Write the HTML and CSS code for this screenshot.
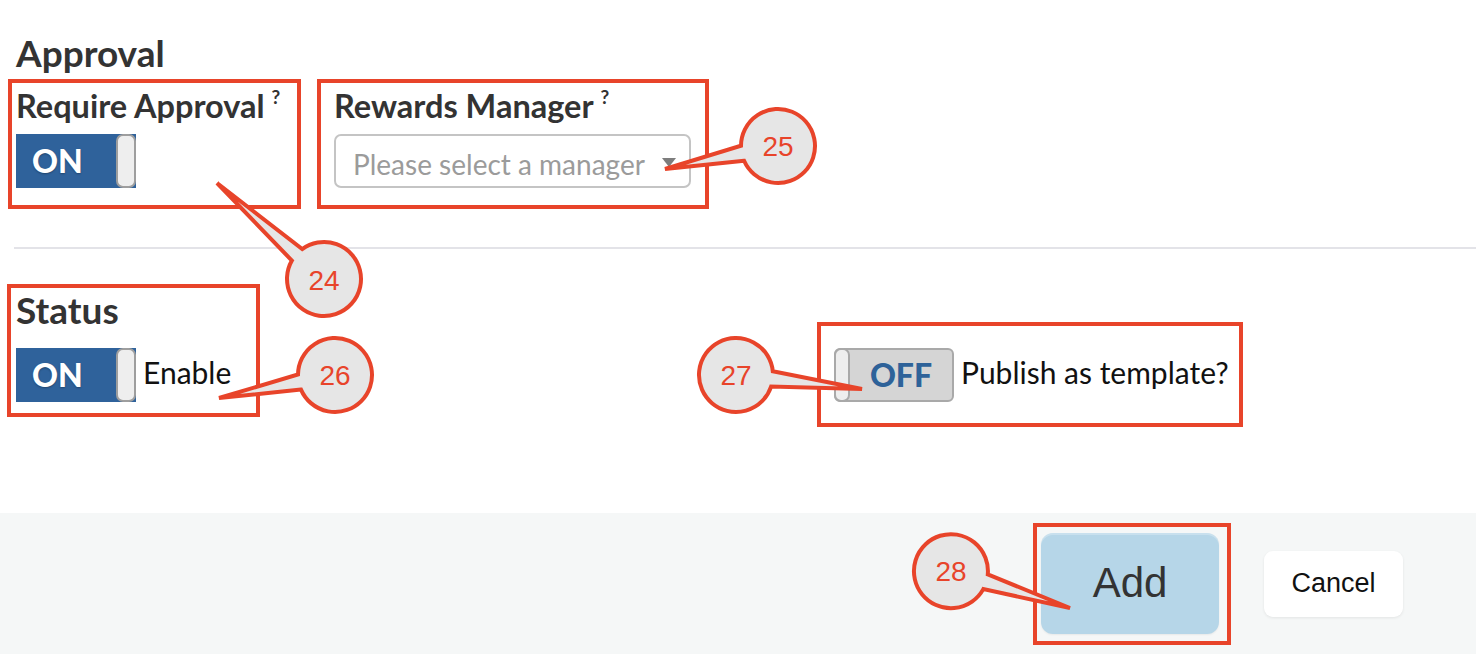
FILE: index.html
```html
<!DOCTYPE html>
<html lang="en">
<head>
  <meta charset="UTF-8" />
  <meta name="viewport" content="width=device-width, initial-scale=1.0" />
  <title>Reward settings</title>
  <link rel="stylesheet" href="styles.css">
</head>
<body>
  <div class="page">
    <section class="approval">
      <h2 class="section-title">Approval</h2>
      <div class="field-row">
        <div class="field mark require-box">
          <label class="field-label">Require Approval<span class="hint">?</span></label>
          <div class="toggle on">
            <span class="toggle-text">ON</span>
            <span class="knob"></span>
          </div>
        </div>
        <div class="field mark manager-box">
          <label class="field-label">Rewards Manager<span class="hint">?</span></label>
          <div class="select">
            <span class="placeholder">Please select a manager</span>
            <span class="caret"></span>
          </div>
        </div>
      </div>
    </section>

    <hr class="divider" />

    <section class="status">
      <div class="field mark status-box">
        <h2 class="section-title">Status</h2>
        <div class="switch-row">
          <div class="toggle on">
            <span class="toggle-text">ON</span>
            <span class="knob"></span>
          </div>
          <span class="switch-label">Enable</span>
        </div>
      </div>
      <div class="field mark publish-box">
        <div class="switch-row">
          <div class="toggle off">
            <span class="knob"></span>
            <span class="toggle-text">OFF</span>
          </div>
          <span class="switch-label">Publish as template?</span>
        </div>
      </div>
    </section>

    <footer class="actions">
      <div class="mark add-box">
        <button class="btn btn-add">Add</button>
      </div>
      <button class="btn btn-cancel">Cancel</button>
    </footer>

    <!-- numbered callouts drawn over the screenshot -->
    <svg class="callouts" width="1476" height="654" viewBox="0 0 1476 654">
      <g class="bubble">
        <path d="M291.9 260.6 L217 183 L302.2 249.1 A37 37 0 1 1 291.9 260.6 Z" />
        <text x="324" y="290">24</text>
      </g>
      <g class="bubble">
        <path d="M744.1 160.8 L665 169 L741 145.7 A37 37 0 1 1 744.1 160.8 Z" />
        <text x="778" y="156">25</text>
      </g>
      <g class="bubble">
        <path d="M301 389.6 L219 398 L298 374.5 A37 37 0 1 1 301 389.6 Z" />
        <text x="335" y="385">26</text>
      </g>
      <g class="bubble">
        <path d="M772.8 371.3 L862 389 L771.1 386.6 A37 37 0 1 1 772.8 371.3 Z" />
        <text x="736" y="385">27</text>
      </g>
      <g class="bubble">
        <path d="M987.8 574.4 L1070 608 L983.3 589.1 A37 37 0 1 1 987.8 574.4 Z" />
        <text x="951" y="581">28</text>
      </g>
    </svg>
  </div>
</body>
</html>
```

FILE: styles.css
```css
body {
  margin: 0;
  font-family: Lato, "Liberation Sans", sans-serif;
  background-color: #fff;
  color: #333;
}
.page {
  position: relative;
  width: 1476px;
  height: 654px;
  overflow: hidden;
}
.approval {
  padding: 33px 0 0 8px;
}
.section-title {
  margin: 0 0 6px 8px;
  font-size: 37px;
  line-height: 40px;
  font-weight: 700;
  color: #333;
}
.field-row {
  display: flex;
  gap: 16px;
}
.mark {
  border: 4px solid #e8442a;
  box-sizing: border-box;
}
.field-label {
  display: block;
  font-size: 32.5px;
  line-height: 36px;
  font-weight: 700;
  color: #333;
}
.hint {
  font-size: 19px;
  line-height: 0;
  vertical-align: 14px;
  margin-left: 7px;
}
.require-box {
  width: 293px;
  height: 130px;
  padding: 5px 0 0 4px;
}
.manager-box {
  width: 392px;
  height: 130px;
  padding: 5px 0 0 13px;
}
.require-box .toggle,
.manager-box .select {
  margin-top: 10px;
}

/* toggles */
.toggle {
  display: flex;
  align-items: stretch;
  width: 120px;
  height: 54px;
  box-sizing: border-box;
  font-size: 32px;
  font-weight: 900;
}
.toggle.on {
  background-color: #2f629b;
  color: #fff;
}
.toggle.on .toggle-text {
  flex: 1;
  padding-left: 16px;
  line-height: 54px;
  text-shadow: 0 1px 2px rgba(0, 0, 0, 0.3);
}
.toggle.off {
  background-color: #d5d5d5;
  border: 2px solid #a9a9a9;
  border-radius: 6px;
  color: #2e6299;
}
.toggle.off .toggle-text {
  flex: 1;
  text-align: center;
  line-height: 50px;
  font-size: 32px;
}
.knob {
  width: 20px;
  box-sizing: border-box;
  background-color: #eeeeee;
  border: 2px solid #9e9e9e;
  border-radius: 7px;
}
.toggle.off .knob {
  width: 16px;
  margin: -2px 0 -2px -2px;
  border-color: #a9a9a9;
}

/* select */
.select {
  display: flex;
  align-items: center;
  justify-content: space-between;
  width: 357px;
  height: 54px;
  box-sizing: border-box;
  padding: 0 13px 0 17px;
  border: 2px solid #c4c4c4;
  border-radius: 7px;
}
.placeholder {
  font-size: 28px;
  color: #9b9b9b;
  padding-top: 5px;
}
.caret {
  width: 0;
  height: 0;
  border-left: 7px solid transparent;
  border-right: 7px solid transparent;
  border-top: 9px solid #7d7d7d;
  margin-top: 2px;
}

.divider {
  margin: 38px 0 0 14px;
  height: 2px;
  border: 0;
  background-color: #e3e3e8;
}

/* status */
.status {
  display: flex;
  align-items: flex-start;
  padding: 35px 0 0 7px;
}
.status-box {
  width: 253px;
  height: 133px;
  padding: 2px 0 0 5px;
}
.status-box .section-title {
  margin: 0 0 18px 0;
}
.switch-row {
  display: flex;
  align-items: center;
  gap: 7px;
}
.switch-label {
  font-size: 30px;
  color: #111;
  padding-bottom: 6px;
}
.publish-box {
  width: 426px;
  height: 105px;
  margin: 38px 0 0 557px;
  padding: 22px 0 0 13px;
}

/* footer */
.actions {
  display: flex;
  justify-content: flex-end;
  align-items: center;
  gap: 33px;
  margin-top: 86px;
  height: 141px;
  padding-right: 73px;
  background-color: #f5f7f7;
}
.add-box {
  width: 198px;
  height: 122px;
  padding: 4px;
}
.btn {
  font-family: "Liberation Sans", Arial, sans-serif;
  border: 0;
  color: #333;
}
.btn-add {
  width: 178px;
  height: 101px;
  margin-top: 2px;
  background-color: #b6d6e8;
  border-radius: 12px;
  font-size: 42px;
  box-shadow: inset 0 2px 0 rgba(255, 255, 255, 0.25), 0 1px 2px rgba(0, 0, 0, 0.06);
}
.btn-cancel {
  width: 139px;
  height: 66px;
  background-color: #fff;
  border-radius: 9px;
  font-size: 27px;
  color: #111;
  box-shadow: 0 1px 3px rgba(0, 0, 0, 0.08);
}

/* callouts */
.callouts {
  position: absolute;
  top: 0;
  left: 0;
  pointer-events: none;
}
.bubble path {
  fill: #e6e6e6;
  stroke: #e8442a;
  stroke-width: 4;
  stroke-linejoin: miter;
}
.bubble text {
  font-family: "Liberation Sans", Arial, sans-serif;
  font-size: 28px;
  fill: #e8442a;
  text-anchor: middle;
}
```
